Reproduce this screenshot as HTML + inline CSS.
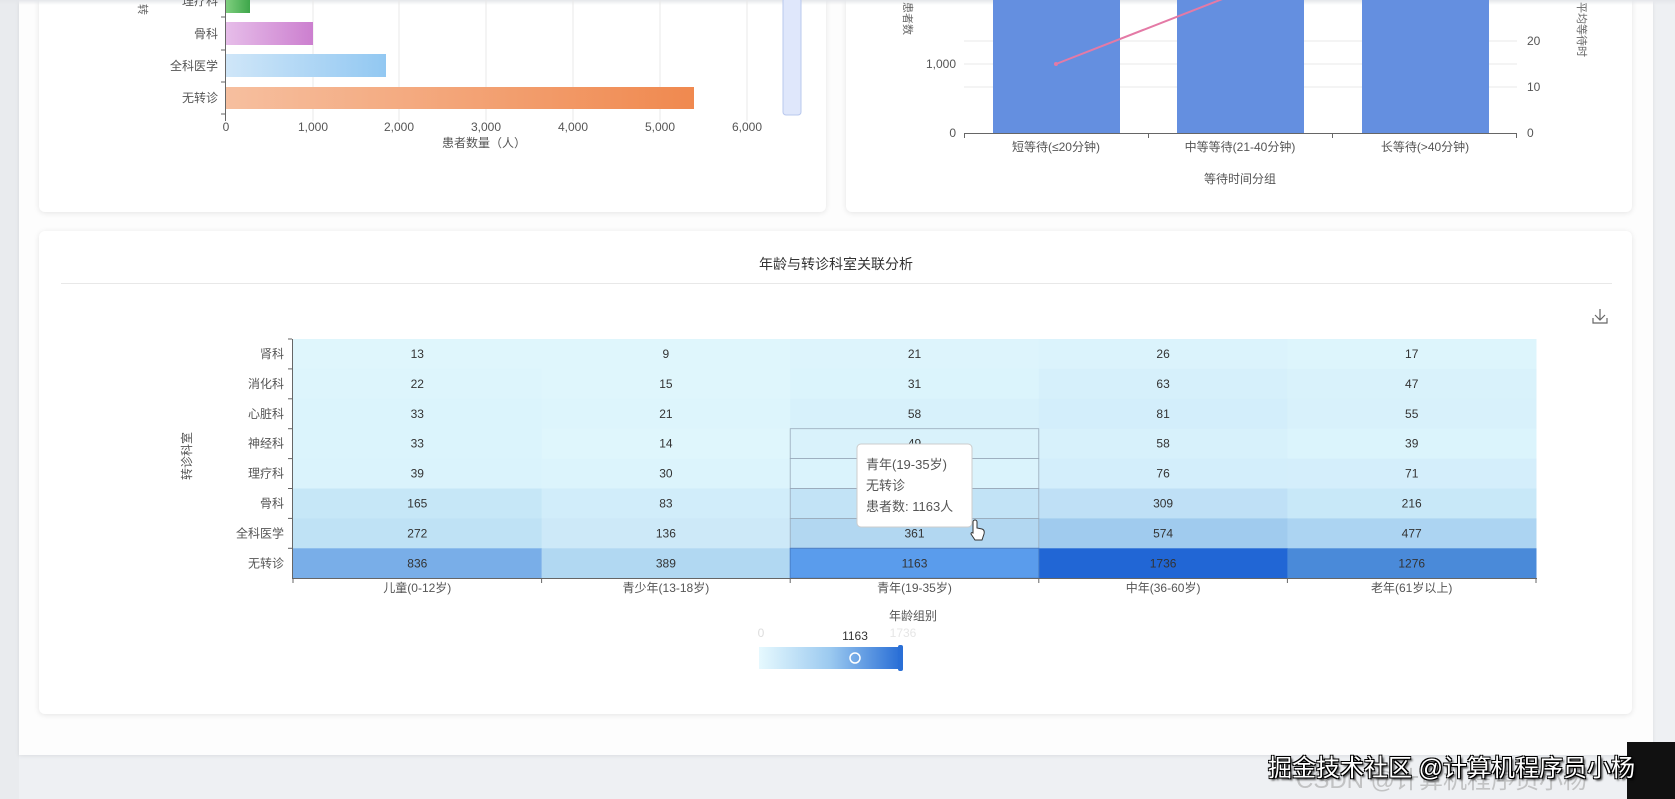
<!DOCTYPE html>
<html><head><meta charset="utf-8"><style>
html,body{margin:0;padding:0;width:1675px;height:799px;overflow:hidden;background:#eef0f3;font-family:"Liberation Sans","Noto Sans CJK SC",sans-serif}
.abs{position:absolute}
.panel{left:19px;top:0;width:1634px;height:755px;background:#fdfdfd;box-shadow:0 1px 4px rgba(0,0,0,.08)}
.card{background:#fff;border-radius:6px;box-shadow:0 1px 6px rgba(0,0,0,.10)}
svg text{font-family:"Liberation Sans","Noto Sans CJK SC",sans-serif}
</style></head><body>
<div class="abs" style="left:0;top:0;width:19px;height:799px;background:#e9ebee"></div>
<div class="abs panel"></div>
<div class="abs card" style="left:39px;top:-20px;width:787px;height:232px"></div>
<div class="abs card" style="left:846px;top:-20px;width:786px;height:232px"></div>
<div class="abs card" style="left:39px;top:231px;width:1593px;height:483px"></div>
<div class="abs" style="left:0;top:0;width:1675px;height:5px;background:linear-gradient(#e4e6ea,rgba(255,255,255,0))"></div>

<svg class="abs" style="left:0;top:0" width="1675" height="799" viewBox="0 0 1675 799">
<defs>
<linearGradient id="g1" x1="0" x2="1"><stop offset="0" stop-color="#7fcf7f"/><stop offset="1" stop-color="#3ea64a"/></linearGradient>
<linearGradient id="g2" x1="0" x2="1"><stop offset="0" stop-color="#e6bde9"/><stop offset="1" stop-color="#cc7fcf"/></linearGradient>
<linearGradient id="g3" x1="0" x2="1"><stop offset="0" stop-color="#cfe6f8"/><stop offset="1" stop-color="#92c8f2"/></linearGradient>
<linearGradient id="g4" x1="0" x2="1"><stop offset="0" stop-color="#f6bf9f"/><stop offset="1" stop-color="#f0894f"/></linearGradient>
<linearGradient id="vm" x1="0" x2="1"><stop offset="0" stop-color="#e6f9fe"/><stop offset="0.5" stop-color="#9ccaf0"/><stop offset="1" stop-color="#2a6fd6"/></linearGradient>
</defs>
<g stroke="#e8e8e8" stroke-width="1">
<line x1="313" y1="0" x2="313" y2="121"/><line x1="399" y1="0" x2="399" y2="121"/><line x1="486" y1="0" x2="486" y2="121"/><line x1="573" y1="0" x2="573" y2="121"/><line x1="660" y1="0" x2="660" y2="121"/><line x1="747" y1="0" x2="747" y2="121"/>
</g>
<rect x="226" y="0" width="24" height="13" fill="url(#g1)"/>
<rect x="226" y="22" width="87" height="23" fill="url(#g2)"/>
<rect x="226" y="54" width="160" height="23" fill="url(#g3)"/>
<rect x="226" y="87" width="468" height="22" fill="url(#g4)"/>
<g stroke="#666"><line x1="225.5" y1="0" x2="225.5" y2="121"/><line x1="221" y1="17" x2="225" y2="17"/><line x1="221" y1="50" x2="225" y2="50"/><line x1="221" y1="82" x2="225" y2="82"/><line x1="221" y1="114" x2="225" y2="114"/></g>
<g font-size="12" fill="#555" text-anchor="end">
<text x="218" y="5">理疗科</text><text x="218" y="38">骨科</text><text x="218" y="70">全科医学</text><text x="218" y="102">无转诊</text></g>
<text x="139" y="4" font-size="11" fill="#666" transform="rotate(90 139 4)">转</text>
<g font-size="12" fill="#555" text-anchor="middle">
<text x="226" y="131">0</text><text x="313" y="131">1,000</text><text x="399" y="131">2,000</text><text x="486" y="131">3,000</text><text x="573" y="131">4,000</text><text x="660" y="131">5,000</text><text x="747" y="131">6,000</text>
<text x="484" y="147">患者数量（人）</text></g>
<rect x="783" y="-2" width="18" height="117" rx="3" fill="#dfe7fb" stroke="#b9c8ee"/>
<g stroke="#eaeaea"><line x1="964" y1="41" x2="1517" y2="41"/><line x1="964" y1="64" x2="1517" y2="64"/><line x1="964" y1="87" x2="1517" y2="87"/></g>
<rect x="993" y="0" width="127" height="133" fill="#648fe0"/>
<rect x="1177" y="0" width="127" height="133" fill="#648fe0"/>
<rect x="1362" y="0" width="127" height="133" fill="#648fe0"/>
<polyline points="1056,64 1225,-2" stroke="#e47aa6" stroke-width="2" fill="none"/>
<circle cx="1056" cy="64" r="2" fill="#e47aa6"/>
<g stroke="#666"><line x1="964" y1="133.5" x2="1517" y2="133.5"/><line x1="964.5" y1="133" x2="964.5" y2="138"/><line x1="1148.5" y1="133" x2="1148.5" y2="138"/><line x1="1332.5" y1="133" x2="1332.5" y2="138"/><line x1="1516.5" y1="133" x2="1516.5" y2="138"/></g>
<g font-size="12" fill="#555">
<text x="956" y="68" text-anchor="end">1,000</text><text x="956" y="137" text-anchor="end">0</text>
<text x="1527" y="45">20</text><text x="1527" y="91">10</text><text x="1527" y="137">0</text>
<text x="1056" y="151" text-anchor="middle">短等待(≤20分钟)</text><text x="1240" y="151" text-anchor="middle">中等等待(21-40分钟)</text><text x="1425" y="151" text-anchor="middle">长等待(&gt;40分钟)</text>
<text x="1240" y="183" text-anchor="middle">等待时间分组</text></g>
<text x="904" y="2" font-size="11" fill="#666" transform="rotate(90 904 2)">患者数</text>
<text x="1578" y="2" font-size="11" fill="#666" transform="rotate(90 1578 2)">平均等待时</text>
<text x="836" y="269" font-size="14" fill="#333" text-anchor="middle">年龄与转诊科室关联分析</text>
<line x1="61" y1="283.5" x2="1612" y2="283.5" stroke="#e8e8e8"/>
<g stroke="#666" fill="none" stroke-width="1.2"><path d="M1600 309v11M1595 315l5 5 5-5M1593 318v5h14v-5"/></g>
<g id="hm"></g>
<g stroke="#666"><line x1="292.5" y1="339" x2="292.5" y2="579"/><line x1="292" y1="578.5" x2="1537" y2="578.5"/></g>
</svg>
<script>
var rows=["肾科","消化科","心脏科","神经科","理疗科","骨科","全科医学","无转诊"];
var data=[[13,9,21,26,17],[22,15,31,63,47],[33,21,58,81,55],[33,14,49,58,39],[39,30,"",76,71],[165,83,"",309,216],[272,136,"361",574,477],[836,389,1163,1736,1276]];
var col=[["#dff6fc","#dff6fc","#ddf4fc","#dbf3fc","#ddf5fc"],["#ddf5fc","#dff6fc","#dbf4fc","#d6f0fb","#d9f2fb"],["#dbf4fc","#ddf5fc","#d7f1fb","#d3eefb","#d8f1fb"],["#dbf4fc","#dff6fc","#d9f2fb","#d7f1fb","#dbf4fc"],["#daf3fc","#dcf4fc","#daf3fc","#d3eefb","#d4eefb"],["#c6e7f7","#d1edfa","#c2e3f6","#bfe0f6","#c8e8f8"],["#bfe2f5","#cde9f8","#b2d7f1","#a0cbee","#acd4f2"],["#79aee8","#b1d8f2","#5a9cec","#2166d5","#4a8ad9"]];
var s="",x0=293,y0=339,cw=248.6,rh=29.9;
for(var r=0;r<8;r++){
 s+='<text x="284" y="'+(y0+r*rh+rh/2+4)+'" font-size="12" fill="#555" text-anchor="end">'+rows[r]+'</text>';
 s+='<line x1="288" x2="292" y1="'+(y0+r*rh)+'" y2="'+(y0+r*rh)+'" stroke="#666"/>';
 for(var c=0;c<5;c++){
  var x=x0+c*cw,y=y0+r*rh;
  s+='<rect x="'+x+'" y="'+y+'" width="'+(cw+0.5)+'" height="'+(rh+0.5)+'" fill="'+col[r][c]+'"/>';
  s+='<text x="'+(x+cw/2)+'" y="'+(y+rh/2+4)+'" font-size="12" fill="#333" text-anchor="middle">'+data[r][c]+'</text>';
 }
}
s+='<g stroke="#9ab" fill="none" stroke-width="0.8">';
for(var r=3;r<7;r++){s+='<rect x="'+(x0+2*cw)+'" y="'+(y0+r*rh)+'" width="'+cw+'" height="'+rh+'"/>';}
s+='</g>';
s+='<rect x="'+(x0+2*cw)+'" y="'+(y0+7*rh)+'" width="'+cw+'" height="'+rh+'" fill="none" stroke="#4a7fc9" stroke-width="1"/>';
var xl=["儿童(0-12岁)","青少年(13-18岁)","青年(19-35岁)","中年(36-60岁)","老年(61岁以上)"];
for(var c=0;c<5;c++){s+='<text x="'+(x0+c*cw+cw/2)+'" y="592" font-size="12" fill="#555" text-anchor="middle">'+xl[c]+'</text>';
 s+='<line x1="'+(x0+c*cw)+'" x2="'+(x0+c*cw)+'" y1="578" y2="583" stroke="#666"/>';}
s+='<line x1="1536" x2="1536" y1="578" y2="583" stroke="#666"/>';
s+='<text x="913" y="620" font-size="12" fill="#555" text-anchor="middle">年龄组别</text>';
s+='<text x="191" y="456" font-size="12" fill="#555" transform="rotate(-90 191 456)" text-anchor="middle">转诊科室</text>';
s+='<rect x="759" y="647" width="141" height="22" fill="url(#vm)"/>';
s+='<rect x="898" y="645" width="5" height="26" rx="2" fill="#2a6fd6"/>';
s+='<circle cx="855" cy="658" r="5" fill="none" stroke="#fff" stroke-width="1.5"/>';
s+='<text x="761" y="637" font-size="12" fill="#ddd" text-anchor="middle">0</text>';
s+='<text x="855" y="640" font-size="12" fill="#333" text-anchor="middle">1163</text>';
s+='<text x="903" y="637" font-size="12" fill="#e6e6e6" text-anchor="middle">1736</text>';
s+='<rect x="857" y="444" width="115" height="83" rx="4" fill="#fff" stroke="#ccc"/>';
s+='<text x="866" y="469" font-size="13" fill="#555">青年(19-35岁)</text><text x="866" y="490" font-size="13" fill="#555">无转诊</text><text x="866" y="511" font-size="13" fill="#555">患者数: 1163人</text>';
s+='<path d="M973 530v-8a2 2 0 0 1 4 0v6l5 1q3 1 2 5l-2 6h-7l-4-6q0-2 2-1z" fill="#fff" stroke="#333" stroke-width="1"/>';
document.getElementById("hm").innerHTML=s;
</script>
<div class="abs" style="left:1627px;top:742px;width:48px;height:57px;background:#111"></div>
<div class="abs" style="left:1296px;top:760px;font-size:24px;color:rgba(150,150,150,.5);white-space:nowrap">CSDN @计算机程序员小杨</div>
<div class="abs" style="left:1268px;top:748px;font-size:24px;color:#fff;white-space:nowrap;text-shadow:1px 1px 0 #000,-1px -1px 0 #000,1px -1px 0 #000,-1px 1px 0 #000,2px 2px 2px #000">掘金技术社区 @计算机程序员小杨</div>
</body></html>
